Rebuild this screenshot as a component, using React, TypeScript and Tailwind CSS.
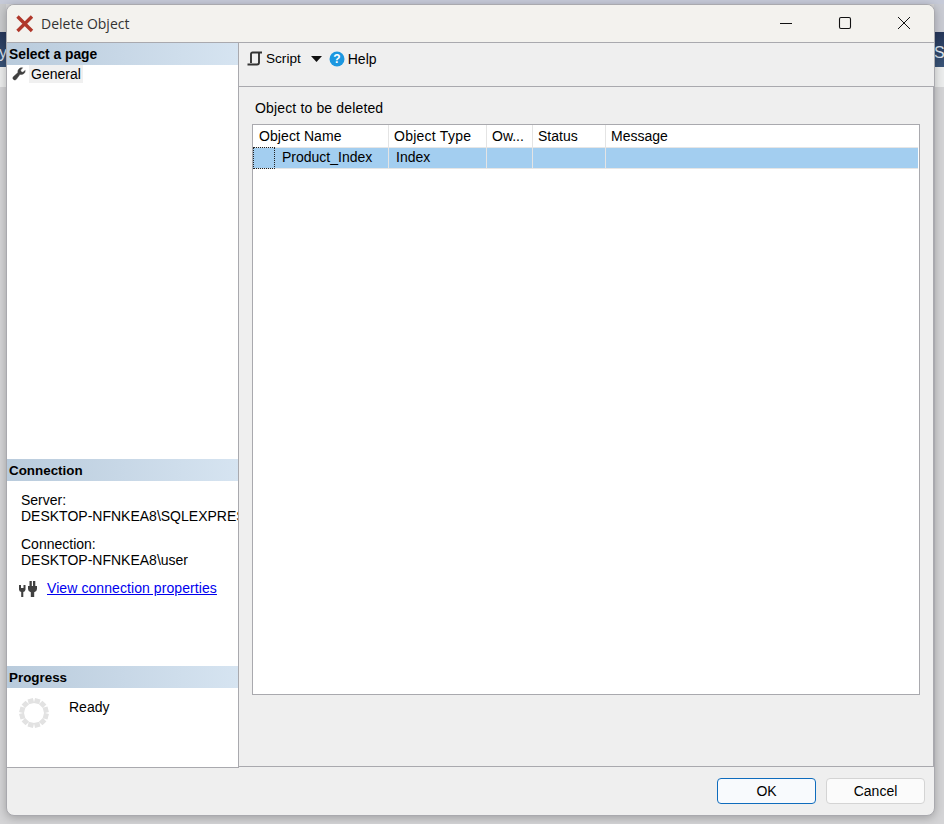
const Header = ({ children, cls }: { children: React.ReactNode; cls?: string }) => (
  <div className={`h-[22px] shrink-0 pl-[2px] pt-[1px] flex items-center font-bold text-black bg-gradient-to-r from-[#b9cbdc] to-[#d6e4f1] ${cls ?? "text-[13.4px]"}`}>
    {children}
  </div>
);

const Spinner = () => {
  const dots = Array.from({ length: 12 });
  return (
    <svg width="30" height="30" viewBox="0 0 30 30">
      {dots.map((_, i) => (
        <rect key={i} x="12.200" y="0.300" width="5.600" height="5" fill="#e2e2e2" transform={`rotate(${i * 30 + 15} 15 15)`} />
      ))}
    </svg>
  );
};

const Cell = ({ w, children, grow }: { w?: string; children?: React.ReactNode; grow?: boolean }) => (
  <div className={`${w ?? ""} ${grow ? "flex-1" : "shrink-0"} h-full flex items-center border-r border-[#e4e4e4] last:border-r-0`}>{children}</div>
);

export default function App() {
  return (
    <div className="relative w-[944px] h-[824px] overflow-hidden bg-[#d4d4d6] font-['Liberation_Sans',Arial,sans-serif] text-[14px] leading-[16px] text-black">
      {/* application behind the dialog */}
      <div className="absolute inset-x-0 top-0 h-[4px] bg-[#c6cad8]" />
      <div className="absolute left-0 top-[4px] w-[6px] h-[28px] bg-[#c9cacc]" />
      <div className="absolute right-0 top-[4px] w-[10px] h-[28px] bg-[#c9cbd3]" />
      <div className="absolute left-0 top-[32px] w-[7px] h-[35px] pt-[6px] bg-gradient-to-b from-[#26375a] to-[#3a5478] text-[#dbe3ee] text-[16px] overflow-hidden flex items-center justify-end">y</div>
      <div className="absolute right-0 top-[32px] w-[10px] h-[35px] pt-[6px] bg-gradient-to-b from-[#26375a] to-[#3a5478] text-[#dbe3ee] text-[16px] overflow-hidden flex items-center whitespace-nowrap">Sc</div>
      <div className="absolute left-0 top-[67px] w-[6px] h-[20px] bg-[#eceded]" />
      <div className="absolute right-0 top-[67px] w-[10px] h-[20px] bg-[#eceded]" />

      {/* dialog */}
      <div className="absolute left-[6px] top-[4px] w-[929px] h-[812px] flex flex-col rounded-[8px] border border-[#a9a9ae] bg-[#efefef] overflow-hidden shadow-[0_2px_10px_rgba(0,0,0,0.25)]">
        <div className="h-[38px] shrink-0 flex items-center bg-[#f3f2ee] border-b border-[#a9a9ae]">
          <svg className="ml-[8px]" width="20" height="20" viewBox="0 0 20 20">
            <path d="M2.500 2.500 L17 17 M17 2.500 L2.500 17" stroke="#b0382b" strokeWidth="3.400" fill="none" />
          </svg>
          <span className="ml-[6px] font-['Open_Sans',sans-serif] text-[14px] text-[#333]">Delete Object</span>
          <div className="ml-auto flex items-center h-full pb-[1px]">
            <svg width="14" height="14" viewBox="0 0 14 14" className="mr-[45px]"><path d="M1 7.500H13" stroke="#111" strokeWidth="1" /></svg>
            <svg width="14" height="14" viewBox="0 0 14 14" className="mr-[45px]"><rect x="1.500" y="1.500" width="11" height="11" rx="1.500" stroke="#111" strokeWidth="1.100" fill="none" /></svg>
            <svg width="14" height="14" viewBox="0 0 14 14" className="mr-[23px]"><path d="M1 1L13 13M13 1L1 13" stroke="#111" strokeWidth="1" /></svg>
          </div>
        </div>

        <div className="flex-1 flex min-h-0">
          {/* left panel */}
          <div className="w-[232px] shrink-0 flex flex-col bg-white border-r border-b border-[#a9a9ae]">
            <Header cls="text-[13.8px]">Select a page</Header>
            <div className="h-[18px] flex items-center pl-[5px]">
              <svg width="14" height="14" viewBox="0 0 14 14" fill="#404040">
                <path d="M13.200 3.400a3.900 3.900 0 0 1-5.200 3.900L4.300 12.300a1.900 1.900 0 0 1-2.900-2.600L6 5.600A3.900 3.900 0 0 1 10.600 0.800L8.600 3l.5 1.800 1.800.5z" stroke="#404040" strokeWidth="0.500" />
              </svg>
              <span className="ml-[3px] px-[2px] h-[18px] flex items-center bg-[#f0f0f0]">General</span>
            </div>
            <div className="flex-1" />
            <Header>Connection</Header>
            <div className="h-[185px] shrink-0 pl-[14px] pt-[11px]">
              <div>Server:</div>
              <div className="whitespace-nowrap overflow-hidden">DESKTOP-NFNKEA8\SQLEXPRESS</div>
              <div className="mt-[12px]">Connection:</div>
              <div>DESKTOP-NFNKEA8\user</div>
              <div className="mt-[10px] flex items-center">
                <svg width="20" height="20" viewBox="0 0 20 20" fill="#404040" className="-ml-[3px]">
                  <path d="M1 7h2v3h2.500V7h2v4.500a2.800 2.800 0 0 1-2.200 2.500V19H3.200v-5A2.800 2.800 0 0 1 1 11.500z" />
                  <path d="M11.500 3h2.300v5H15V3h2.300v5H19v3a3.500 3.500 0 0 1-2.800 3.300V19h-3.400v-4.700A3.500 3.500 0 0 1 10 11V8h1.500z" />
                </svg>
                <a className="ml-[9px] text-[#0000ee] underline tracking-[0.08px]">View connection properties</a>
              </div>
            </div>
            <Header>Progress</Header>
            <div className="h-[79px] shrink-0 flex items-start pl-[12px] pt-[10px]">
              <Spinner />
              <span className="ml-[20px] mt-[1px]">Ready</span>
            </div>
          </div>

          {/* right panel */}
          <div className="flex-1 min-w-0 flex flex-col">
            <div className="h-[44px] shrink-0 flex items-start pt-[8px] pl-[8px] border-b border-[#a9a9ae]">
              <svg width="15" height="16" viewBox="0 0 15 16" fill="none" stroke="#333" strokeWidth="1.900">
                <path d="M4 12V3A1.500 1.500 0 0 1 5.500 1.500H15M12 2V11.500A2 2 0 0 1 10 13.500H0.500" />
              </svg>
              <span className="ml-[4px] text-[13.6px]">Script</span>
              <svg width="11" height="6" viewBox="0 0 11 6" className="ml-[10px] mt-[5px]"><path d="M0 0H11L5.500 6Z" fill="#111" /></svg>
              <svg width="16" height="16" viewBox="0 0 16 16" className="ml-[7px]">
                <circle cx="8" cy="8" r="7.500" fill="#1c97e0" />
                <text x="8" y="12.300" textAnchor="middle" fontSize="12" fontWeight="700" fill="#fff" fontFamily="Liberation Sans">?</text>
              </svg>
              <span className="ml-[3px]">Help</span>
            </div>
            <div className="flex-1 min-h-0 flex flex-col border-r border-b border-[#a9a9ae] mb-[1px] pl-[13px] pr-[13px] pt-[13px]">
              <div className="h-[16px] pl-[3px] tracking-[0.15px]">Object to be deleted</div>
              <div className="mt-[8px] h-[571px] border border-[#a9a9ae] bg-white flex flex-col">
                <div className="h-[22px] shrink-0 flex items-center">
                  <Cell w="w-[136px]"><span className="pl-[6px] tracking-[0.08px]">Object Name</span></Cell>
                  <Cell w="w-[98px]"><span className="pl-[5px] tracking-[0.25px]">Object Type</span></Cell>
                  <Cell w="w-[46px]"><span className="pl-[5px]">Ow...</span></Cell>
                  <Cell w="w-[73px]"><span className="pl-[5px]">Status</span></Cell>
                  <Cell grow><span className="pl-[5px]">Message</span></Cell>
                </div>
                <div className="h-[22px] shrink-0 flex mr-[1px] bg-[#a3cef0] border-y border-[#e6e6e6]">
                  <Cell w="w-[136px]">
                    <span className="w-[22px] h-[22px] -my-[1px] shrink-0 border border-dotted border-[#222]" />
                    <span className="pl-[7px] pb-[2px]">Product_Index</span>
                  </Cell>
                  <Cell w="w-[98px]"><span className="pl-[7px] pb-[2px]">Index</span></Cell>
                  <Cell w="w-[46px]" />
                  <Cell w="w-[73px]" />
                  <Cell grow />
                </div>
              </div>
            </div>
          </div>
        </div>

        {/* footer */}
        <div className="h-[47px] shrink-0 flex items-start justify-end pt-[10px] pr-[9px] gap-[10px]">
          <button className="w-[99px] h-[26px] rounded-[4px] border border-[#0f6cbd] bg-[#f8fafd] text-[14px]">OK</button>
          <button className="w-[99px] h-[26px] rounded-[4px] border border-[#d4d4d4] bg-[#fbfbfb] text-[14px]">Cancel</button>
        </div>
      </div>
    </div>
  );
}
